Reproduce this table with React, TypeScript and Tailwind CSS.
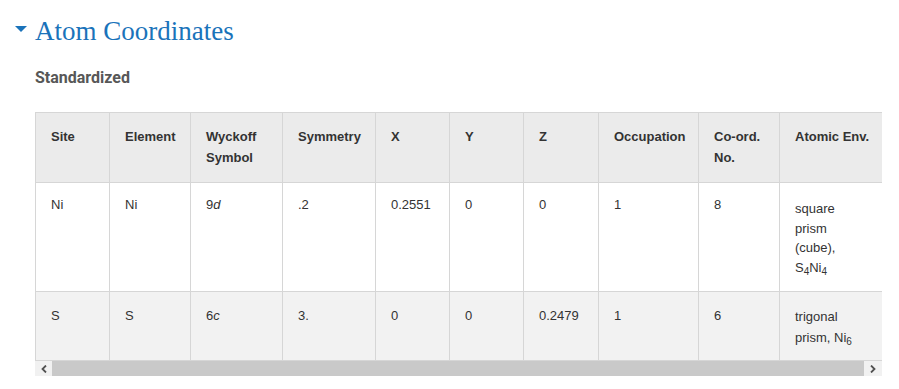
const cols = [74, 81, 92, 93, 74, 74, 75, 100, 81, 120];

const headers = ['Site', 'Element', 'Wyckoff Symbol', 'Symmetry', 'X', 'Y', 'Z', 'Occupation', 'Co-ord. No.', 'Atomic Env.'];

function Env({ children, lead }: { children: React.ReactNode; lead: string }) {
  return <div className={lead}>{children}</div>;
}

export default function App() {
  return (
    <div className="w-[899px] h-[389px] overflow-hidden bg-white font-['Liberation_Sans',Arial,sans-serif]">
      <div className="flex items-start pl-[15px] pt-[15px]">
        <svg width="12" height="6" viewBox="0 0 12 6" className="mt-[11px] mr-[8px] shrink-0">
          <polygon points="0,0 12,0 6,6" fill="#1a73ba" />
        </svg>
        <h2 className="font-['Liberation_Serif',Georgia,serif] text-[27px] leading-[32px] text-[#1a73ba]">
          Atom Coordinates
        </h2>
      </div>

      <div className="pl-[35px] w-[882px]">
        <h3 className="mt-[21px] font-['Roboto',Arial,sans-serif] font-bold text-[16px] leading-[20px] text-[#575757]">
          Standardized
        </h3>

        <div className="mt-[24px] overflow-hidden w-[847px]">
          <table className="table-fixed border-collapse text-[13px] text-[#333]" style={{ width: cols.reduce((a, b) => a + b, 0) }}>
            <colgroup>
              {cols.map((w, i) => (
                <col key={i} style={{ width: w }} />
              ))}
            </colgroup>
            <thead>
              <tr className="bg-[#ebebeb]">
                {headers.map((h) => (
                  <th
                    key={h}
                    className="border border-[#d6d6d6] px-[15px] pt-[13px] pb-[14px] text-left align-top font-bold leading-[21px]"
                  >
                    {h === 'Wyckoff Symbol' ? (
                      <>Wyckoff<br />Symbol</>
                    ) : h === 'Co-ord. No.' ? (
                      <>Co-ord.<br />No.</>
                    ) : (
                      h
                    )}
                  </th>
                ))}
              </tr>
            </thead>
            <tbody>
              <tr className="bg-white">
                {['Ni', 'Ni'].map((t, i) => (
                  <td key={i} className="border border-[#d6d6d6] px-[15px] pt-[12px] pb-[13px] align-top leading-[20px]">{t}</td>
                ))}
                <td className="border border-[#d6d6d6] px-[15px] pt-[12px] pb-[13px] align-top leading-[20px]">9<i>d</i></td>
                {['.2', '0.2551', '0', '0', '1', '8'].map((t, i) => (
                  <td key={i} className="border border-[#d6d6d6] px-[15px] pt-[12px] pb-[13px] align-top leading-[20px]">{t}</td>
                ))}
                <td className="border border-[#d6d6d6] px-[15px] pt-[12px] pb-[13px] align-top">
                  <Env lead="mt-[4px] leading-[19.7px] w-[80px]">
                    square<br />prism<br />(cube),<br />S<sub className="text-[10px] leading-none">4</sub>Ni<sub className="text-[10px] leading-none">4</sub>
                  </Env>
                </td>
              </tr>
              <tr className="bg-[#f2f2f2]">
                {['S', 'S'].map((t, i) => (
                  <td key={i} className="border border-[#d6d6d6] px-[15px] pt-[14px] pb-[11px] align-top leading-[20px]">{t}</td>
                ))}
                <td className="border border-[#d6d6d6] px-[15px] pt-[14px] pb-[11px] align-top leading-[20px]">6<i>c</i></td>
                {['3.', '0', '0', '0.2479', '1', '6'].map((t, i) => (
                  <td key={i} className="border border-[#d6d6d6] px-[15px] pt-[14px] pb-[11px] align-top leading-[20px]">{t}</td>
                ))}
                <td className="border border-[#d6d6d6] px-[15px] pt-[14px] pb-[11px] align-top">
                  <Env lead="leading-[21.6px] w-[80px]">
                    trigonal<br />prism, Ni<sub className="text-[10px] leading-none">6</sub>
                  </Env>
                </td>
              </tr>
            </tbody>
          </table>
        </div>

        <div className="flex h-[15px] w-[847px] bg-[#f1f1f1]">
          <div className="flex w-[17px] items-center justify-center">
            <svg width="6" height="8" viewBox="0 0 6 8">
              <polyline points="5,0.5 1.5,4 5,7.5" fill="none" stroke="#505050" strokeWidth="1.8" />
            </svg>
          </div>
          <div className="flex-1 bg-[#c9c9c9]" />
          <div className="flex w-[18px] items-center justify-center">
            <svg width="6" height="8" viewBox="0 0 6 8">
              <polyline points="1,0.5 4.5,4 1,7.5" fill="none" stroke="#505050" strokeWidth="1.8" />
            </svg>
          </div>
        </div>
      </div>
    </div>
  );
}
